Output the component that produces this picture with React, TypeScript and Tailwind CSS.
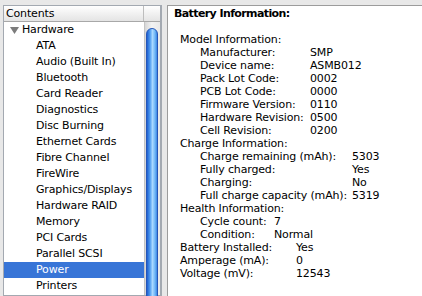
import React from 'react';

const hardware = [
  'ATA',
  'Audio (Built In)',
  'Bluetooth',
  'Card Reader',
  'Diagnostics',
  'Disc Burning',
  'Ethernet Cards',
  'Fibre Channel',
  'FireWire',
  'Graphics/Displays',
  'Hardware RAID',
  'Memory',
  'PCI Cards',
  'Parallel SCSI',
  'Power',
  'Printers',
];

const model = [
  ['Manufacturer:', 'SMP'],
  ['Device name:', 'ASMB012'],
  ['Pack Lot Code:', '0002'],
  ['PCB Lot Code:', '0000'],
  ['Firmware Version:', '0110'],
  ['Hardware Revision:', '0500'],
  ['Cell Revision:', '0200'],
];

const charge = [
  ['Charge remaining (mAh):', '5303'],
  ['Fully charged:', 'Yes'],
  ['Charging:', 'No'],
  ['Full charge capacity (mAh):', '5319'],
];

const health = [
  ['Cycle count:', '7'],
  ['Condition:', 'Normal'],
];

const battery = [
  ['Battery Installed:', 'Yes'],
  ['Amperage (mA):', '0'],
  ['Voltage (mV):', '12543'],
];

function InfoRow({ label, value, labelW, pad }: { label: string; value: string; labelW: string; pad: string }) {
  return (
    <div className={`flex h-[13px] leading-[13px] whitespace-nowrap ${pad}`}>
      <span className={`shrink-0 ${labelW}`}>{label}</span>
      <span>{value}</span>
    </div>
  );
}

export default function App() {
  return (
    <div
      className="w-[422px] h-[296px] overflow-hidden bg-[#e8e8e8] flex pt-[5px] pl-[3px] gap-[5px] text-[11px] text-black tracking-[-0.15px]"
      style={{ fontFamily: '"Lucida Grande", "DejaVu Sans", sans-serif' }}
    >
      {/* Source list */}
      <div className="w-[159px] shrink-0 flex flex-col border border-r-2 border-[#a3a9b1] bg-white">
        <div className="flex h-[16px] shrink-0 border-b border-[#a8a8a8] bg-[linear-gradient(to_bottom,#ffffff,#f1f1f1_50%,#e4e4e4)]">
          <div className="flex-1 pl-[2px] leading-[15px] border-r border-[#bdbdbd]">Contents</div>
          <div className="w-[16px]" />
        </div>
        <div className="flex flex-1 min-h-0">
          <div className="flex-1">
            <div className="flex items-center h-[16px] pl-[6px] gap-[3px]">
              <svg width="9" height="7" viewBox="0 0 9 7">
                <path d="M0 0 H9 L4.5 7 Z" fill="#7c7c7c" />
              </svg>
              <span className="leading-[16px]">Hardware</span>
            </div>
            {hardware.map((h) => (
              <div
                key={h}
                className={`h-[16px] leading-[16px] pl-[32px] whitespace-nowrap ${h === 'Power' ? 'bg-[#3875d7] text-white' : ''}`}
              >
                {h}
              </div>
            ))}
          </div>
          {/* Scrollbar */}
          <div className="w-[16px] shrink-0 border-l border-[#c4c4c4] bg-[linear-gradient(to_right,#d6d6d6,#f3f3f3_45%,#e9e9e9)] pt-[6px] pl-[1px]">
            <div className="w-[12px] h-[300px] rounded-t-[7px] border border-[#2556b8] bg-[linear-gradient(to_right,#1f5fcf,#4f9cf0_30%,#a9d8ff_55%,#6fb7f7_80%,#3d86e2)]" />
          </div>
        </div>
      </div>

      {/* Detail pane */}
      <div className="flex-1 bg-white border-l border-t border-[#9c9c9c] pl-[6px] pt-[1px]">
        <div className="h-[13px] leading-[13px] font-bold tracking-[-0.6px]">Battery Information:</div>
        <div className="h-[13px]" />
        <div className="h-[13px] leading-[13px] pl-[6px]">Model Information:</div>
        {model.map(([l, v]) => (
          <InfoRow key={l} label={l} value={v} labelW="w-[110px]" pad="pl-[26px]" />
        ))}
        <div className="h-[13px] leading-[13px] pl-[6px]">Charge Information:</div>
        {charge.map(([l, v]) => (
          <InfoRow key={l} label={l} value={v} labelW="w-[152px]" pad="pl-[26px]" />
        ))}
        <div className="h-[13px] leading-[13px] pl-[6px]">Health Information:</div>
        {health.map(([l, v]) => (
          <InfoRow key={l} label={l} value={v} labelW="w-[74px]" pad="pl-[26px]" />
        ))}
        {battery.map(([l, v]) => (
          <InfoRow key={l} label={l} value={v} labelW="w-[116px]" pad="pl-[6px]" />
        ))}
      </div>
    </div>
  );
}
